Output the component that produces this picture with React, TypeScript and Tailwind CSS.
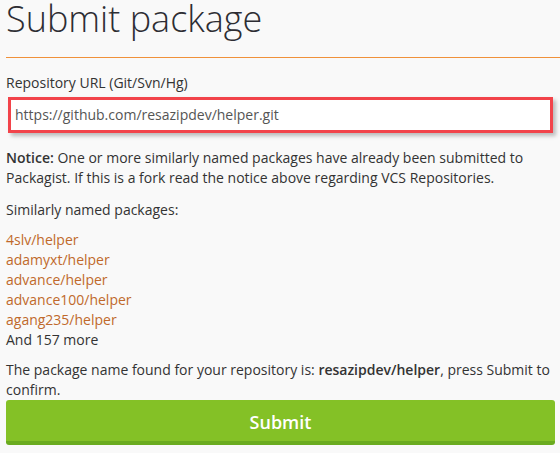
export default function App() {
  const pkgs = ["4slv/helper", "adamyxt/helper", "advance/helper", "advance100/helper", "agang235/helper"];
  return (
    <div className="w-[560px] h-[453px] overflow-hidden bg-[#f9f9f9] pl-[6px] text-[14px] leading-[20px] text-[#333333] font-['Open_Sans',sans-serif]">
      <h1 className="text-[36px] font-light leading-[38px] pb-[19px] border-b border-[#f0913a] text-[#2d2d33]">
        Submit package
      </h1>
      <div className="w-[549px]">
        <label className="block mt-[15px]">Repository URL (Git/Svn/Hg)</label>
        <div className="mt-[4px] ml-[2px] w-[545px] h-[36px] border-[3px] border-[#f2434a] bg-white shadow-[3px_3px_4px_rgba(0,0,0,0.25)] flex items-center">
          <input
            className="w-full bg-transparent outline-none pl-[4px] text-[14px] text-[#555555] font-['Open_Sans',sans-serif]"
            defaultValue="https://github.com/resazipdev/helper.git"
            readOnly
          />
        </div>
        <p className="mt-[15px]">
          <strong className="font-semibold">Notice:</strong> One or more similarly named packages have already been submitted to Packagist. If this is a fork read the notice above regarding VCS Repositories.
        </p>
        <p className="mt-[12px]">Similarly named packages:</p>
        <ul className="mt-[10px]">
          {pkgs.map((p) => (
            <li key={p}>
              <a href="#" className="text-[#c0692b]">{p}</a>
            </li>
          ))}
          <li>And 157 more</li>
        </ul>
        <p className="mt-[10px]">
          The package name found for your repository is: <strong className="font-semibold">resazipdev/helper</strong>, press Submit to confirm.
        </p>
        <button className="w-[549px] h-[45px] bg-[#84c126] border-b-[4px] border-[#6aab1f] rounded-[3px] text-white text-[18px] font-semibold flex items-center justify-center pt-[2px]">
          Submit
        </button>
      </div>
    </div>
  );
}
